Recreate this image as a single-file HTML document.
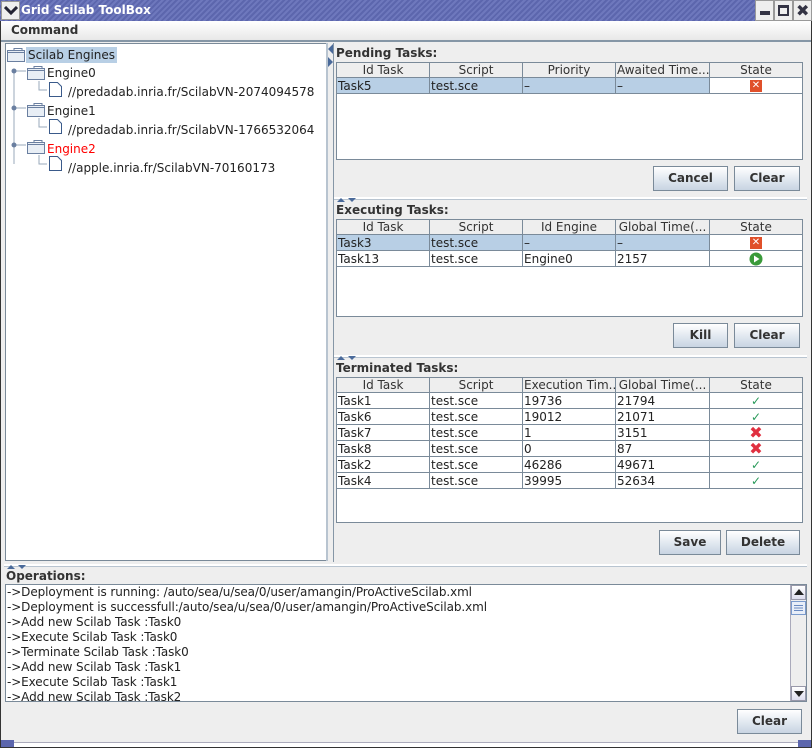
<!DOCTYPE html>
<html><head><meta charset="utf-8"><style>
*{margin:0;padding:0;box-sizing:border-box}
body{width:812px;height:748px;background:#eeeeee;font-family:"DejaVu Sans","Liberation Sans",sans-serif;font-size:12px;color:#222;position:relative;overflow:hidden}
.a{position:absolute}
.b{font-weight:bold;font-size:12px;color:#333}
.btn{position:absolute;border:1px solid #7a8a99;background:linear-gradient(#fff,#dde5ee 60%,#c8d4e2);font-weight:bold;font-size:12px;text-align:center;color:#333}
table{position:absolute;border-collapse:collapse;table-layout:fixed;background:#fff}
td,th{border:1px solid #7a8a99;height:16px;padding:0 1px;font-weight:normal;white-space:nowrap;overflow:hidden;font-size:12px;line-height:14px}
th{background:#eee;text-align:center;height:15px;color:#333}
tr.s td{background:#b8cfe5}
tr.s td.w{background:#fff}
.area{position:absolute;background:#fff;border:1px solid #7a8a99}
.div{position:absolute;height:3px;background:#fff;border-bottom:1px solid #b8c4d0}
.ops div{height:15px;line-height:15px;white-space:nowrap;padding-left:1px;letter-spacing:-0.1px}
.tr{position:absolute}
</style></head><body>
<div class="a" style="left:0;top:0;width:812px;height:748px;border:1px solid #333;border-top:0"></div>
<div class="a" style="left:0;top:0;width:812px;height:21px;background:repeating-linear-gradient(135deg,#5c66ad 0 2px,#6e78bd 2px 4px)"></div>
<div class="a" style="left:1px;top:1px;width:19px;height:19px;background:#eee;border:1px solid #999"></div>
<svg class="a" style="left:4px;top:6px" width="14" height="10"><path d="M1 1 L7 7 L13 1" stroke="#223" stroke-width="3" fill="none"/></svg>
<div class="a" style="left:21px;top:3px;color:#fff;font-weight:bold;font-size:12px">Grid Scilab ToolBox</div>
<div class="a" style="left:755px;top:0;width:19px;height:21px;background:#eee;border:1px solid #999"></div>
<div class="a" style="left:760px;top:11px;width:10px;height:4px;background:#334"></div>
<div class="a" style="left:774px;top:0;width:19px;height:21px;background:#eee;border:1px solid #999"></div>
<div class="a" style="left:778px;top:5px;width:11px;height:11px;border:2px solid #334;border-top-width:3px"></div>
<div class="a" style="left:793px;top:0;width:19px;height:21px;background:#eee;border:1px solid #999"></div>
<div class="a" style="left:796px;top:1px;font-weight:bold;font-size:16px;color:#334">✖</div>
<div class="a" style="left:1px;top:21px;width:810px;height:19px;background:linear-gradient(#fff,#e8e8e8)"></div>
<div class="a b" style="left:11px;top:23px;font-size:12px">Command</div>
<div class="a" style="left:1px;top:40px;width:810px;height:2px;background:#8596a6"></div>
<div class="area" style="left:5px;top:43px;width:323px;height:518px"></div>
<div class="a" style="left:326px;top:43px;width:2px;height:518px;background:#b8c4d0"></div>
<svg class="a" style="left:6px;top:46px" width="60" height="130">
<g fill="none" stroke="#6a7fa0">
<rect x="1.5" y="4.5" width="17" height="11" fill="#e8eef5"/><path d="M1.5 6.5h17M8 4.5v-2h8v2" />
<path d="M8 25v93M8 25h12M8 62h12M8 99h12" stroke="#9ab"/>
<rect x="21.5" y="22.5" width="17" height="11" fill="#e8eef5"/><path d="M21.5 24.5h17M28 22.5v-2h8v2"/>
<rect x="21.5" y="59.5" width="17" height="11" fill="#e8eef5"/><path d="M21.5 61.5h17M28 59.5v-2h8v2"/>
<rect x="21.5" y="96.5" width="17" height="11" fill="#e8eef5"/><path d="M21.5 98.5h17M28 96.5v-2h8v2"/>
<path d="M33 35v9h8M33 72v9h8M33 109v9h8" stroke="#9ab"/>
<path d="M43.5 36.5h8l4 4v10h-12z M43.5 73.5h8l4 4v10h-12z M43.5 110.5h8l4 4v10h-12z" fill="#fff" stroke="#3a5a8a"/>
</g>
<circle cx="8" cy="25" r="2.5" fill="#6a7fa0"/><circle cx="8" cy="62" r="2.5" fill="#6a7fa0"/><circle cx="8" cy="99" r="2.5" fill="#6a7fa0"/>
</svg>
<div class="a" style="left:26px;top:47px;background:#b8cfe5;padding:0 2px;height:16px;line-height:17px">Scilab Engines</div>
<div class="a" style="left:47px;top:66px">Engine0</div>
<div class="a" style="left:68px;top:85px">//predadab.inria.fr/ScilabVN-2074094578</div>
<div class="a" style="left:47px;top:104px">Engine1</div>
<div class="a" style="left:68px;top:123px">//predadab.inria.fr/ScilabVN-1766532064</div>
<div class="a" style="left:47px;top:142px;color:#f00">Engine2</div>
<div class="a" style="left:68px;top:161px">//apple.inria.fr/ScilabVN-70160173</div>
<svg class="a" style="left:328px;top:44px" width="6" height="26"><path d="M5 0L0 5L5 10z M0 13L5 18L0 23z" fill="#4a6a9a"/></svg>
<div class="a" style="left:333px;top:43px;width:474px;height:519px;border-left:1px solid #8596a6"></div>
<div class="a b" style="left:336px;top:46px">Pending Tasks:</div>
<div class="area" style="left:336px;top:62px;width:467px;height:98px"></div>
<table style="left:336px;top:62px;width:466px">
<colgroup><col style="width:93px"><col style="width:93px"><col style="width:93px"><col style="width:94px"><col style="width:93px"></colgroup>
<tr><th>Id Task</th><th>Script</th><th>Priority</th><th>Awaited Time...</th><th>State</th></tr>
<tr class="s"><td>Task5</td><td>test.sce</td><td>–</td><td>–</td><td class="w" style="text-align:center"><span style="display:inline-block;width:12px;height:12px;background:#e0502a;color:#fff;font-size:10px;line-height:12px;font-weight:bold;vertical-align:middle">✕</span></td></tr>
</table>
<div class="btn" style="left:653px;top:166px;width:75px;height:25px;line-height:23px">Cancel</div>
<div class="btn" style="left:734px;top:166px;width:66px;height:25px;line-height:23px">Clear</div>
<div class="div" style="left:334px;top:197px;width:473px"></div>
<svg class="a" style="left:337px;top:197px" width="22" height="6"><path d="M0 5L4 1L8 5z M11 1L19 1L15 5z" fill="#4a6a9a"/></svg>
<div class="a b" style="left:336px;top:203px">Executing Tasks:</div>
<div class="area" style="left:336px;top:219px;width:467px;height:98px"></div>
<table style="left:336px;top:219px;width:466px">
<colgroup><col style="width:93px"><col style="width:93px"><col style="width:93px"><col style="width:94px"><col style="width:93px"></colgroup>
<tr><th>Id Task</th><th>Script</th><th>Id Engine</th><th>Global Time(...</th><th>State</th></tr>
<tr class="s"><td>Task3</td><td>test.sce</td><td>–</td><td>–</td><td class="w" style="text-align:center"><span style="display:inline-block;width:12px;height:12px;background:#e0502a;color:#fff;font-size:10px;line-height:12px;font-weight:bold;vertical-align:middle">✕</span></td></tr>
<tr><td>Task13</td><td>test.sce</td><td>Engine0</td><td>2157</td><td style="text-align:center"><svg width="14" height="14" style="vertical-align:middle"><circle cx="7" cy="7" r="6.5" fill="#3a9a3a"/><path d="M5 3.5L10.5 7L5 10.5z" fill="#fff"/></svg></td></tr>
</table>
<div class="btn" style="left:673px;top:323px;width:55px;height:25px;line-height:23px">Kill</div>
<div class="btn" style="left:734px;top:323px;width:66px;height:25px;line-height:23px">Clear</div>
<div class="div" style="left:334px;top:355px;width:473px"></div>
<svg class="a" style="left:337px;top:355px" width="22" height="6"><path d="M0 5L4 1L8 5z M11 1L19 1L15 5z" fill="#4a6a9a"/></svg>
<div class="a b" style="left:336px;top:361px">Terminated Tasks:</div>
<div class="area" style="left:336px;top:377px;width:467px;height:146px"></div>
<table style="left:336px;top:377px;width:466px">
<colgroup><col style="width:93px"><col style="width:93px"><col style="width:93px"><col style="width:94px"><col style="width:93px"></colgroup>
<tr><th>Id Task</th><th>Script</th><th>Execution Tim...</th><th>Global Time(...</th><th>State</th></tr>
<tr><td>Task1</td><td>test.sce</td><td>19736</td><td>21794</td><td style="text-align:center;color:#2a9a5a;font-size:12px">✓</td></tr>
<tr><td>Task6</td><td>test.sce</td><td>19012</td><td>21071</td><td style="text-align:center;color:#2a9a5a;font-size:12px">✓</td></tr>
<tr><td>Task7</td><td>test.sce</td><td>1</td><td>3151</td><td style="text-align:center;color:#e03040;font-size:16px;line-height:14px;font-weight:bold">✖</td></tr>
<tr><td>Task8</td><td>test.sce</td><td>0</td><td>87</td><td style="text-align:center;color:#e03040;font-size:16px;line-height:14px;font-weight:bold">✖</td></tr>
<tr><td>Task2</td><td>test.sce</td><td>46286</td><td>49671</td><td style="text-align:center;color:#2a9a5a;font-size:12px">✓</td></tr>
<tr><td>Task4</td><td>test.sce</td><td>39995</td><td>52634</td><td style="text-align:center;color:#2a9a5a;font-size:12px">✓</td></tr>
</table>
<div class="btn" style="left:659px;top:530px;width:62px;height:25px;line-height:23px">Save</div>
<div class="btn" style="left:726px;top:530px;width:74px;height:25px;line-height:23px">Delete</div>
<div class="div" style="left:4px;top:564px;width:803px"></div>
<svg class="a" style="left:7px;top:564px" width="22" height="6"><path d="M0 5L4 1L8 5z M11 1L19 1L15 5z" fill="#4a6a9a"/></svg>
<div class="a b" style="left:6px;top:569px">Operations:</div>
<div class="area" style="left:5px;top:584px;width:802px;height:118px"></div>
<div class="a ops" style="left:6px;top:585px;width:784px;height:116px;overflow:hidden">
<div>-&gt;Deployment is running: /auto/sea/u/sea/0/user/amangin/ProActiveScilab.xml</div>
<div>-&gt;Deployment is successfull:/auto/sea/u/sea/0/user/amangin/ProActiveScilab.xml</div>
<div>-&gt;Add new Scilab Task :Task0</div>
<div>-&gt;Execute Scilab Task :Task0</div>
<div>-&gt;Terminate Scilab Task :Task0</div>
<div>-&gt;Add new Scilab Task :Task1</div>
<div>-&gt;Execute Scilab Task :Task1</div>
<div>-&gt;Add new Scilab Task :Task2</div>
</div>
<div class="a" style="left:790px;top:585px;width:16px;height:116px;background:#eee;border-left:1px solid #aab"></div>
<div class="a" style="left:791px;top:585px;width:15px;height:15px;background:linear-gradient(#fff,#dde);border:1px solid #99a"></div>
<svg class="a" style="left:794px;top:589px" width="10" height="6"><path d="M0 6L5 0L10 6z" fill="#222"/></svg>
<div class="a" style="left:791px;top:601px;width:15px;height:14px;background:#e8eef8;border:1px solid #7a9acc"></div>
<svg class="a" style="left:794px;top:604px" width="10" height="8"><path d="M0 1.5h9M0 4h9M0 6.5h9" stroke="#6a8ac0"/></svg>
<div class="a" style="left:791px;top:686px;width:15px;height:15px;background:linear-gradient(#fff,#dde);border:1px solid #99a"></div>
<svg class="a" style="left:794px;top:691px" width="10" height="6"><path d="M0 0L5 6L10 0z" fill="#222"/></svg>
<div class="btn" style="left:737px;top:709px;width:65px;height:25px;line-height:23px">Clear</div>
<div class="a" style="left:1px;top:742px;width:810px;height:5px;background:#fff;border-top:1px solid #aab"></div>
<div class="a" style="left:1px;top:740px;width:13px;height:7px;background:#5c66ad"></div>
<div class="a" style="left:798px;top:740px;width:13px;height:7px;background:#5c66ad"></div>
</body></html>
